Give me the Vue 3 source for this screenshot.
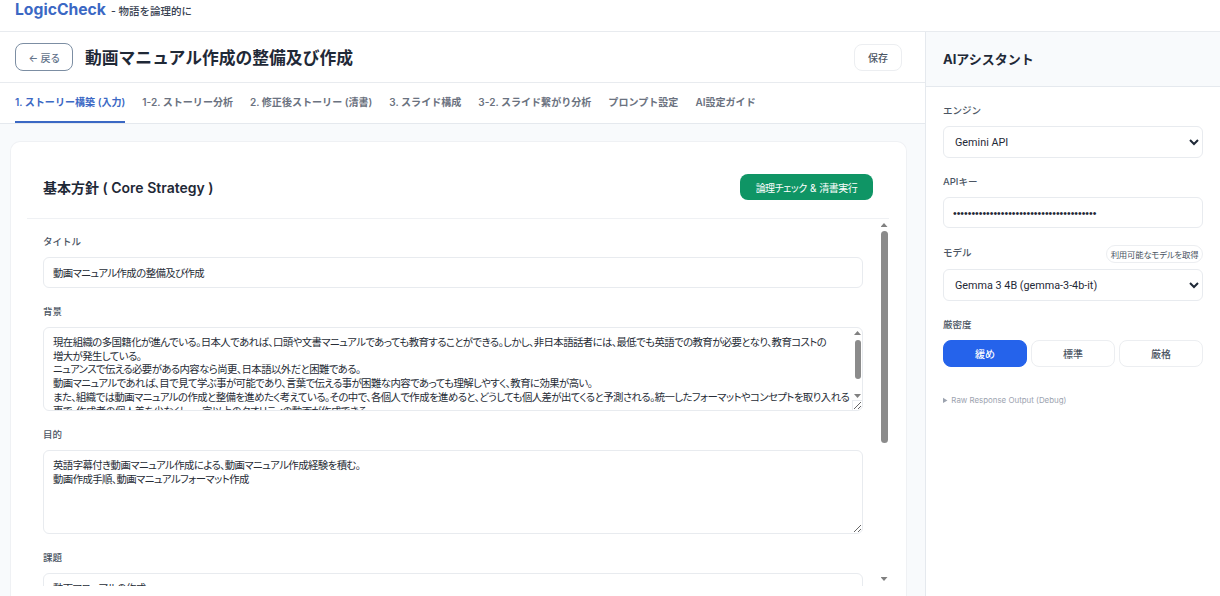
<script setup>
const title = '動画マニュアル作成の整備及び作成'
const tabs = ['1. ストーリー構築 (入力)', '1-2. ストーリー分析', '2. 修正後ストーリー (清書)', '3. スライド構成', '3-2. スライド繋がり分析', 'プロンプト設定', 'AI設定ガイド']
const background = `現在組織の多国籍化が進んでいる。日本人であれば、口頭や文書マニュアルであっても教育することができる。しかし、非日本語話者には、最低でも英語での教育が必要となり、教育コストの
増大が発生している。
ニュアンスで伝える必要がある内容なら尚更、日本語以外だと困難である。
動画マニュアルであれば、目で見て学ぶ事が可能であり、言葉で伝える事が困難な内容であっても理解しやすく、教育に効果が高い。
また、組織では動画マニュアルの作成と整備を進めたく考えている。その中で、各個人で作成を進めると、どうしても個人差が出てくると予測される。統一したフォーマットやコンセプトを取り入れる
事で、作成者の個人差を少なくし、一定以上のクオリティの動画が作成できる。`
const purpose = `英語字幕付き動画マニュアル作成による、動画マニュアル作成経験を積む。
動画作成手順、動画マニュアルフォーマット作成`
const issue = '動画マニュアルの作成'
const apiKey = 'x'.repeat(39)
</script>

<template>
  <div class="page">
    <header class="topbar">
      <span class="logo">LogicCheck</span>
      <span class="tagline">- 物語を論理的に</span>
    </header>
    <div class="workspace">
      <main class="main">
        <div class="subheader">
          <button class="back">← 戻る</button>
          <h1 class="doc-title">{{ title }}</h1>
          <button class="save">保存</button>
        </div>
        <nav class="tabs">
          <a v-for="(t, i) in tabs" :key="t" class="tab" :class="{ active: i === 0 }">{{ t }}</a>
        </nav>
        <div class="content">
          <section class="card">
            <div class="card-head">
              <h2>基本方針 ( Core Strategy )</h2>
              <button class="run">論理チェック &amp; 清書実行</button>
            </div>
            <div class="card-body">
              <div class="scroller">
                <div class="form">
                  <label class="label">タイトル</label>
                  <input class="field title-input" :value="title" />
                  <label class="label">背景</label>
                  <div class="area-wrap">
                    <textarea class="field area" wrap="off" :value="background"></textarea>
                    <div class="mini-bar">
                      <i class="arrow up"></i>
                      <i class="mini-thumb"></i>
                      <i class="arrow down"></i>
                    </div>
                    <div class="corner"></div>
                  </div>
                  <label class="label">目的</label>
                  <textarea class="field area" :value="purpose"></textarea>
                  <label class="label">課題</label>
                  <textarea class="field area" :value="issue"></textarea>
                </div>
              </div>
              <div class="vbar">
                <i class="arrow up"></i>
                <i class="thumb"></i>
                <i class="arrow down"></i>
              </div>
            </div>
          </section>
        </div>
      </main>
      <aside class="side">
        <div class="side-head">AIアシスタント</div>
        <div class="side-body">
          <label class="side-label">エンジン</label>
          <select class="side-field"><option>Gemini API</option></select>
          <label class="side-label">APIキー</label>
          <input class="side-field key" type="password" :value="apiKey" />
          <div class="model-row">
            <label class="side-label">モデル</label>
            <button class="fetch">利用可能なモデルを取得</button>
          </div>
          <select class="side-field"><option>Gemma 3 4B (gemma-3-4b-it)</option></select>
          <label class="side-label">厳密度</label>
          <div class="levels">
            <button class="level on">緩め</button>
            <button class="level">標準</button>
            <button class="level">厳格</button>
          </div>
          <details class="debug"><summary>Raw Response Output (Debug)</summary></details>
        </div>
      </aside>
    </div>
  </div>
</template>

<style>
html, body { margin: 0; overflow: hidden; }
</style>

<style scoped>
* { box-sizing: border-box; }
.page {
  height: 596px;
  display: flex;
  flex-direction: column;
  overflow: hidden;
  background: #fff;
  color: #1f2937;
  font-family: Inter, "Noto Sans CJK JP", sans-serif;
}
button, textarea, input { font-family: inherit; font-feature-settings: "palt"; }
.topbar {
  height: 32px;
  flex: none;
  display: flex;
  align-items: baseline;
  gap: 5px;
  padding: 0 15px;
  border-bottom: 1px solid #e8ebef;
  line-height: 20px;
}
.logo { font-size: 15.7px; font-weight: 700; color: #3b68c4; }
.tagline { font-size: 10.5px; font-weight: 500; color: #374151; }
.workspace { flex: 1; min-height: 0; display: flex; }
.main { flex: 1; min-width: 0; display: flex; flex-direction: column; background: #f8fafc; }
.subheader {
  height: 51px;
  flex: none;
  display: flex;
  align-items: center;
  padding: 0 23px 0 15px;
  background: #fff;
  border-bottom: 1px solid #e8ebef;
}
.back {
  width: 58px;
  height: 28px;
  padding: 0;
  background: #fff;
  border: 1px solid #7c8ea3;
  border-radius: 8px;
  font-size: 10px;
  font-weight: 500;
  color: #64748b;
}
.doc-title { flex: 1; margin: 0 0 0 12px; font-size: 16.8px; font-weight: 700; color: #1f2937; }
.save {
  width: 48px;
  height: 27px;
  padding: 0;
  background: #fff;
  border: 1px solid #eceef1;
  border-radius: 8px;
  font-size: 10px;
  font-weight: 500;
  color: #4b5563;
}
.tabs {
  height: 41px;
  flex: none;
  display: flex;
  gap: 17px;
  padding: 0 15px;
  background: #fff;
  border-bottom: 1px solid #e5e9ee;
}
.tab {
  height: 40px;
  padding-top: 12px;
  font-size: 10.05px;
  line-height: 15px;
  font-weight: 600;
  color: #6b7280;
  white-space: nowrap;
}
.tab.active { color: #3b68c4; border-bottom: 2px solid #3b68c4; }
.content { flex: 1; min-height: 0; padding: 17px 18px 0 10px; overflow: hidden; }
.card {
  height: 100%;
  padding: 0 17px 10px 16px;
  background: #fff;
  border: 1px solid #eff1f4;
  border-bottom: 0;
  border-radius: 10px 10px 0 0;
  display: flex;
  flex-direction: column;
}
.card-head {
  height: 77px;
  flex: none;
  display: flex;
  align-items: center;
  justify-content: space-between;
  padding: 14px 16px 0 16px;
  border-bottom: 1px solid #eff1f4;
}
.card-head h2 { margin: 0; font-size: 14px; font-weight: 600; color: #1f2937; }
.run {
  width: 133px;
  height: 26px;
  padding: 0;
  border: 0;
  border-radius: 8px;
  background: #0f9565;
  color: #fff;
  font-size: 10px;
  letter-spacing: -0.5px;
  word-spacing: 1px;
  font-weight: 400;
}
.card-body { flex: 1; min-height: 0; display: flex; }
.scroller { flex: 1; min-width: 0; overflow: hidden; }
.vbar { width: 10px; flex: none; display: flex; flex-direction: column; align-items: center; padding: 4px 0 5px; }
.arrow { display: block; width: 7px; height: 4px; flex: none; background: #808080; }
.arrow.up { clip-path: polygon(50% 0, 100% 100%, 0 100%); }
.arrow.down { clip-path: polygon(0 0, 100% 0, 50% 100%); margin-top: auto; }
.thumb { display: block; width: 7px; height: 212px; margin-top: 4px; background: #8b8b8b; border-radius: 4px; }
.form {
  display: flex;
  flex-direction: column;
  padding: 16px 16px 0 16px;
}
.label {
  font-size: 9.5px;
  line-height: 14px;
  font-weight: 500;
  color: #4b5563;
  margin-bottom: 8px;
}
.field {
  display: block;
  width: 100%;
  border: 1px solid #e8ebef;
  border-radius: 6px;
  background: #fff;
  color: #262c36;
  font-size: 10.4px;
  letter-spacing: -0.57px;
  line-height: 13.7px;
  padding: 0 9px;
  outline: none;
}
.title-input { height: 31px; margin-bottom: 17px; }
.area { height: 84px; padding: 8px 9px; margin-bottom: 17px; resize: vertical; overflow: hidden; }
.area-wrap { position: relative; }
.mini-bar {
  position: absolute;
  top: 4px;
  right: 2px;
  height: 67px;
  width: 7px;
  display: flex;
  flex-direction: column;
  align-items: center;
  pointer-events: none;
}
.mini-thumb { display: block; width: 6px; height: 39px; margin-top: 5px; background: #8b8b8b; border-radius: 3px; }
.corner {
  position: absolute;
  top: 73px;
  right: 0;
  width: 11px;
  height: 11px;
  border-top: 1px solid #e8ebef;
  border-left: 1px solid #e8ebef;
  pointer-events: none;
}
.side { width: 295px; flex: none; border-left: 1px solid #e5e9ee; background: #fff; }
.side-head {
  height: 55px;
  display: flex;
  align-items: center;
  padding: 0 17px 2px;
  background: #f8fafc;
  border-bottom: 1px solid #e5e9ee;
  font-size: 13px;
  font-weight: 700;
  color: #1f2937;
}
.side-body { display: flex; flex-direction: column; padding: 16px 17px; }
.side-label { display: block; font-size: 9.5px; line-height: 15px; font-weight: 500; color: #4b5563; margin-bottom: 8px; }
.side-field {
  display: block;
  width: 100%;
  height: 32px;
  border: 1px solid #e8ebef;
  border-radius: 6px;
  background: #fff;
  color: #1f2937;
  font-family: Roboto, sans-serif;
  font-size: 10.8px;
  padding: 0 7px;
  margin-bottom: 16px;
  outline: none;
}
.key { height: 31px; padding: 0 9px; margin-bottom: 17px; font-family: "Liberation Sans", sans-serif; font-size: 10.5px; letter-spacing: 0; }
.model-row { display: flex; justify-content: space-between; align-items: flex-start; margin-bottom: 6px; }
.model-row .side-label { margin: 0; }
.fetch {
  height: 18px;
  width: 97px;
  padding: 0;
  background: #fff;
  border: 1px solid #eceef1;
  border-radius: 9px;
  font-size: 8.4px;
  letter-spacing: -0.2px;
  color: #4b5563;
  white-space: nowrap;
}
.levels { display: flex; gap: 4px; }
.level {
  flex: 1;
  height: 27px;
  padding: 0;
  background: #fff;
  border: 1px solid #eceef1;
  border-radius: 8px;
  font-size: 10px;
  font-weight: 500;
  color: #4b5563;
}
.level.on { background: #2563eb; border-color: #2563eb; color: #fff; }
.debug { margin-top: 27px; font-size: 7.9px; line-height: 12px; color: #9ca3af; }
</style>
